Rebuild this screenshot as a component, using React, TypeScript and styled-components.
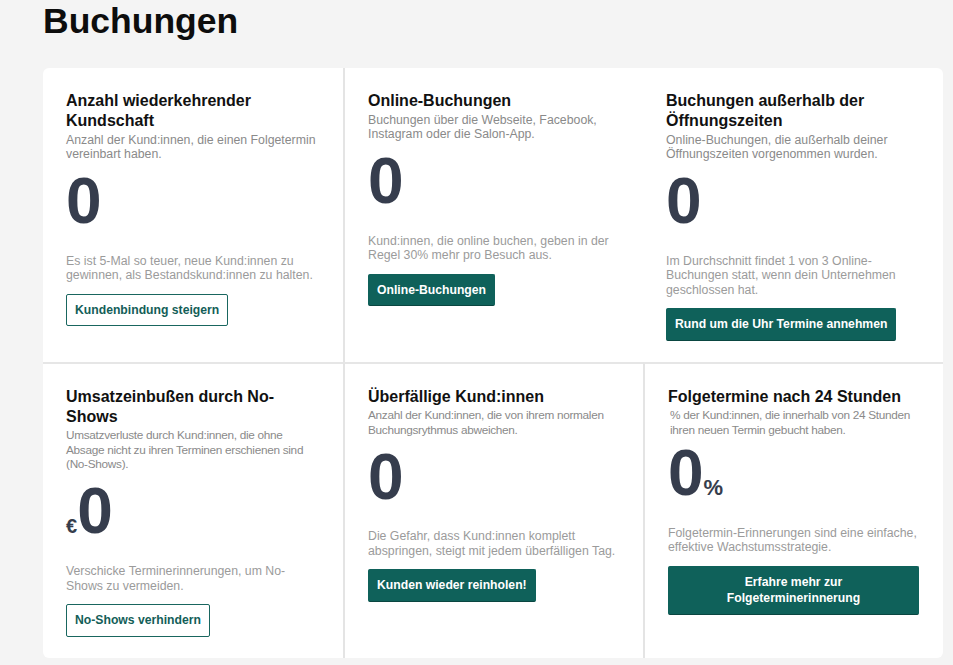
import styled, { createGlobalStyle, css } from "styled-components";

const GlobalStyle = createGlobalStyle`
  body {
    margin: 0;
    background: #f4f4f4;
    font-family: "Liberation Sans", Arial, sans-serif;
  }
`;

const Page = styled.div`
  padding: 1px 10px 0 43px;
`;

const PageTitle = styled.h1`
  margin: 0 0 27px;
  font-size: 35.5px;
  line-height: 40px;
  font-weight: 700;
  color: #0d0d0d;
`;

const Board = styled.div`
  width: 900px;
  display: grid;
  grid-template-columns: repeat(3, 300px);
  background: #fff;
  border-radius: 6px;
  overflow: hidden;
`;

const Cell = styled.div<{ $divider?: boolean; $topLine?: boolean }>`
  box-sizing: border-box;
  display: flex;
  flex-direction: column;
  align-items: flex-start;
  padding: 23px 24px 21px 23px;
  ${(p) =>
    p.$divider &&
    css`
      border-left: 2px solid #e4e4e4;
    `}
  ${(p) =>
    p.$topLine &&
    css`
      border-top: 2px solid #e6e6e6;
    `}
`;

const CardTitle = styled.h3`
  margin: 0;
  font-size: 16px;
  line-height: 20px;
  font-weight: 700;
  color: #111;
`;

const Description = styled.p<{ $compact?: boolean; $indent?: boolean }>`
  margin: 2px 0 0;
  font-size: 12.3px;
  line-height: 14.3px;
  color: #8a8a8a;
  ${(p) =>
    p.$compact &&
    css`
      margin-top: 1px;
      font-size: 11.8px;
      line-height: 14.7px;
      letter-spacing: -0.3px;
    `}
  ${(p) =>
    p.$indent &&
    css`
      padding-left: 2px;
    `}
`;

const BigNumber = styled.div<{ $lift?: boolean }>`
  margin-top: ${(p) => (p.$lift ? "4px" : "7.5px")};
  font-size: 64px;
  line-height: 64px;
  font-weight: 700;
  color: #363d4d;
`;

const Unit = styled.span<{ $size: number }>`
  font-size: ${(p) => p.$size}px;
  line-height: 1;
`;

const Hint = styled.p`
  margin: 20.5px 0 0;
  font-size: 12.3px;
  line-height: 14.6px;
  color: #9b9b9b;
`;

const ActionButton = styled.button<{ $filled?: boolean; $block?: boolean }>`
  margin-top: 11px;
  max-width: 100%;
  padding: 7px 8px;
  border-radius: 2px;
  font-family: inherit;
  font-size: 12.2px;
  line-height: 16.5px;
  font-weight: 700;
  text-align: center;
  cursor: pointer;
  ${(p) =>
    p.$block &&
    css`
      width: 100%;
    `}
  ${(p) =>
    p.$filled
      ? css`
          background: #0f615a;
          color: #fff;
          border: 1px solid #0f615a;
          border-bottom-color: #0a4641;
        `
      : css`
          background: #fff;
          color: #135e58;
          border: 1px solid #19665f;
        `}
`;

type Stat = {
  title: string;
  description: string;
  value: string;
  prefix?: string;
  suffix?: string;
  hint: string;
  action: string[];
  filled?: boolean;
  compact?: boolean;
  indent?: boolean;
  divider?: boolean;
  topLine?: boolean;
};

const stats: Stat[] = [
  {
    title: "Anzahl wiederkehrender Kundschaft",
    description: "Anzahl der Kund:innen, die einen Folgetermin vereinbart haben.",
    value: "0",
    hint: "Es ist 5-Mal so teuer, neue Kund:innen zu gewinnen, als Bestandskund:innen zu halten.",
    action: ["Kundenbindung steigern"],
  },
  {
    title: "Online-Buchungen",
    description: "Buchungen über die Webseite, Facebook, Instagram oder die Salon-App.",
    value: "0",
    hint: "Kund:innen, die online buchen, geben in der Regel 30% mehr pro Besuch aus.",
    action: ["Online-Buchungen"],
    filled: true,
    divider: true,
  },
  {
    title: "Buchungen außerhalb der Öffnungszeiten",
    description: "Online-Buchungen, die außerhalb deiner Öffnungszeiten vorgenommen wurden.",
    value: "0",
    hint: "Im Durchschnitt findet 1 von 3 Online-Buchungen statt, wenn dein Unternehmen geschlossen hat.",
    action: ["Rund um die Uhr Termine annehmen"],
    filled: true,
  },
  {
    title: "Umsatzeinbußen durch No-Shows",
    description:
      "Umsatzverluste durch Kund:innen, die ohne Absage nicht zu ihren Terminen erschienen sind (No-Shows).",
    value: "0",
    prefix: "€",
    hint: "Verschicke Terminerinnerungen, um No-Shows zu vermeiden.",
    action: ["No-Shows verhindern"],
    compact: true,
    topLine: true,
  },
  {
    title: "Überfällige Kund:innen",
    description: "Anzahl der Kund:innen, die von ihrem normalen Buchungsrythmus abweichen.",
    value: "0",
    hint: "Die Gefahr, dass Kund:innen komplett abspringen, steigt mit jedem überfälligen Tag.",
    action: ["Kunden wieder reinholen!"],
    filled: true,
    compact: true,
    divider: true,
    topLine: true,
  },
  {
    title: "Folgetermine nach 24 Stunden",
    description: "% der Kund:innen, die innerhalb von 24 Stunden ihren neuen Termin gebucht haben.",
    value: "0",
    suffix: "%",
    hint: "Folgetermin-Erinnerungen sind eine einfache, effektive Wachstumsstrategie.",
    action: ["Erfahre mehr zur", "Folgeterminerinnerung"],
    filled: true,
    compact: true,
    indent: true,
    divider: true,
    topLine: true,
  },
];

const StatCard = ({ stat }: { stat: Stat }) => (
  <Cell $divider={stat.divider} $topLine={stat.topLine}>
    <CardTitle>{stat.title}</CardTitle>
    <Description $compact={stat.compact} $indent={stat.indent}>
      {stat.description}
    </Description>
    <BigNumber $lift={Boolean(stat.suffix)}>
      {stat.prefix && <Unit $size={20}>{stat.prefix}</Unit>}
      {stat.value}
      {stat.suffix && <Unit $size={22}>{stat.suffix}</Unit>}
    </BigNumber>
    <Hint>{stat.hint}</Hint>
    <ActionButton $filled={stat.filled} $block={stat.action.length > 1}>
      {stat.action.map((line, i) => (
        <span key={line}>
          {i > 0 && <br />}
          {line}
        </span>
      ))}
    </ActionButton>
  </Cell>
);

export default function App() {
  return (
    <>
      <GlobalStyle />
      <Page>
        <PageTitle>Buchungen</PageTitle>
        <Board>
          {stats.map((s) => (
            <StatCard key={s.title} stat={s} />
          ))}
        </Board>
      </Page>
    </>
  );
}
